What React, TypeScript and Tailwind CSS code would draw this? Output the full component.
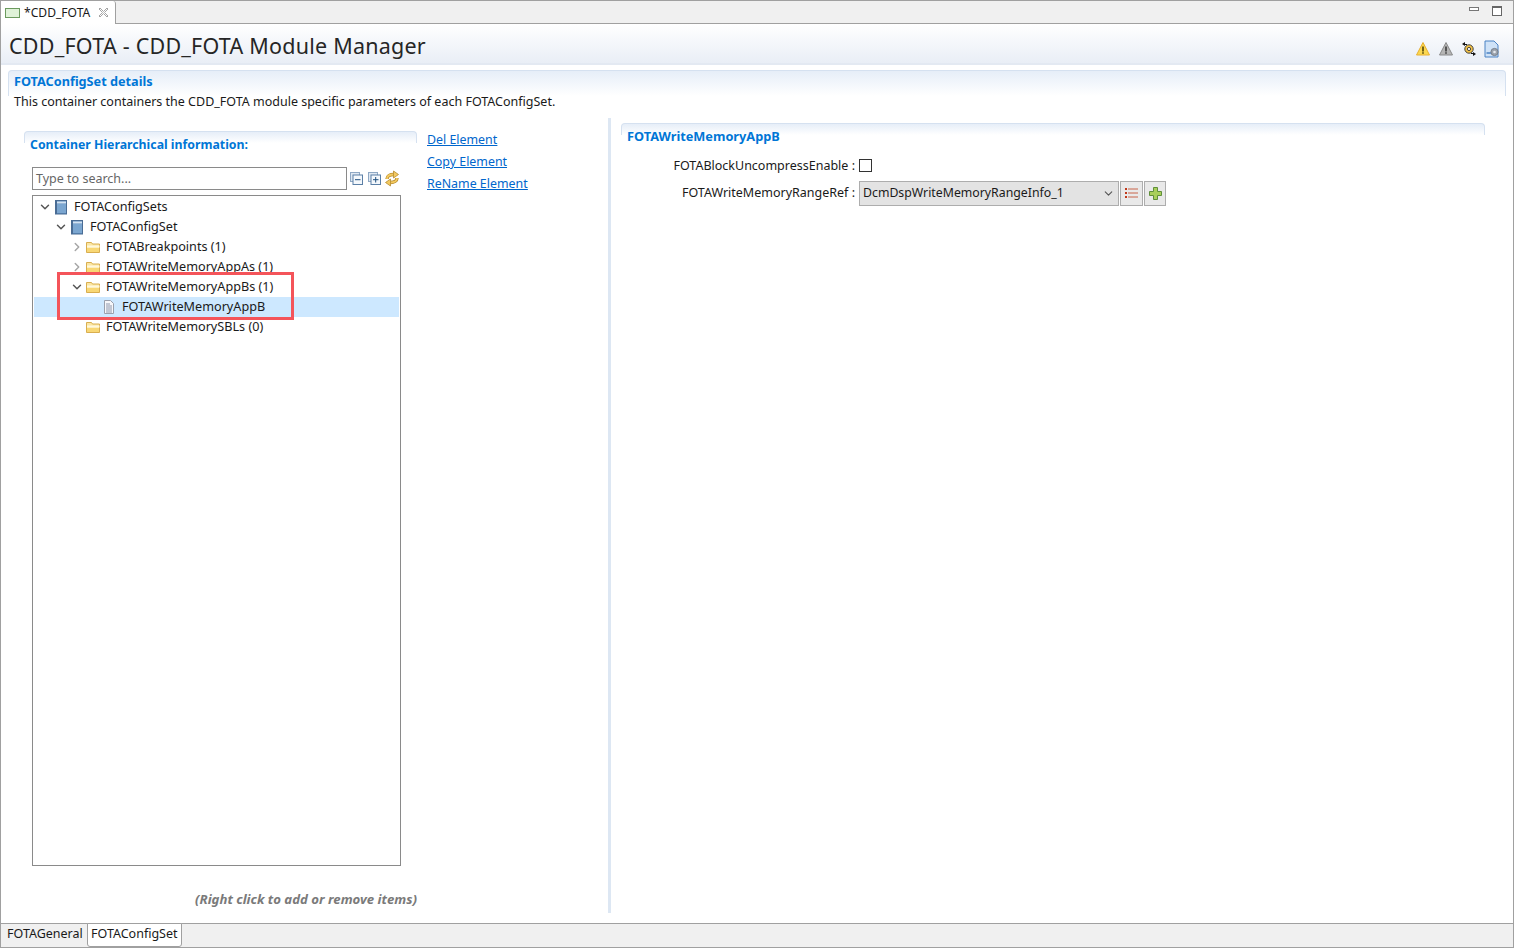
import { ChevronDown, ChevronRight } from "lucide-react";

const FONT = "font-['Noto_Sans','Open_Sans',sans-serif]";

function Folder() {
  return (
    <svg width="16" height="16" viewBox="0 0 16 16" className="shrink-0">
      <path d="M1.5 3.5h5l1 1.5h7v8.5h-13z" fill="#fbe6a2" stroke="#d9ae4f" />
      <path d="M2 6.5h12.5v2H2z" fill="#fff8dc" />
      <path d="M2 9h12v4H2z" fill="#f8d775" />
    </svg>
  );
}

function BookIcon() {
  return (
    <svg width="16" height="16" viewBox="0 0 16 16" className="shrink-0">
      <rect x="2.5" y="1.5" width="11" height="13.5" fill="#5d8cbc" stroke="#4a6c94" />
      <rect x="4" y="2.5" width="9" height="2" fill="#d3e2f1" />
      <rect x="4" y="5" width="9" height="9" fill="#7ba6d0" />
      <rect x="2.5" y="1.5" width="1.5" height="13.5" fill="#4a6c94" />
    </svg>
  );
}

function DocIcon() {
  return (
    <svg width="16" height="16" viewBox="0 0 16 16" className="shrink-0">
      <path d="M3.5 1.5h6l3 3v10h-9z" fill="#f7f7fa" stroke="#9aa0ad" />
      <path d="M5 5h4M5 7h6M5 9h6M5 11h6M5 13h6" stroke="#8d97ad" />
    </svg>
  );
}

function PanelTitle({ children, textClass }: { children: string; textClass: string }) {
  return (
    <div>
      <div className="h-[12px] rounded-t-[4px] border border-b-0 border-[#d5e1f0] bg-gradient-to-b from-[#e6eef8] to-white" />
      <div className={`-mt-[12px] pl-[6px] font-bold leading-[18px] text-[#0076d6] ${textClass}`}>{children}</div>
    </div>
  );
}

type Row = { label: string; depth: number; icon: "book" | "folder" | "doc"; arrow?: "open" | "closed"; selected?: boolean };

const ROWS: Row[] = [
  { label: "FOTAConfigSets", depth: 0, icon: "book", arrow: "open" },
  { label: "FOTAConfigSet", depth: 1, icon: "book", arrow: "open" },
  { label: "FOTABreakpoints (1)", depth: 2, icon: "folder", arrow: "closed" },
  { label: "FOTAWriteMemoryAppAs (1)", depth: 2, icon: "folder", arrow: "closed" },
  { label: "FOTAWriteMemoryAppBs (1)", depth: 2, icon: "folder", arrow: "open" },
  { label: "FOTAWriteMemoryAppB", depth: 3, icon: "doc", selected: true },
  { label: "FOTAWriteMemorySBLs (0)", depth: 2, icon: "folder" },
];

function TreeRow({ row }: { row: Row }) {
  return (
    <div className={`mx-px flex h-5 items-center ${row.selected ? "bg-[#cde8ff]" : ""}`}>
      <div style={{ width: row.depth * 16 + 3 }} className="shrink-0" />
      <div className="flex w-[16px] shrink-0 justify-center">
        {row.arrow === "open" && <ChevronDown size={14} strokeWidth={2.5} className="text-[#555]" />}
        {row.arrow === "closed" && <ChevronRight size={14} strokeWidth={2.5} className="text-[#a6a6a6]" />}
      </div>
      <div className="flex w-[21px] shrink-0 items-center">
        {row.icon === "book" && <BookIcon />}
        {row.icon === "folder" && <Folder />}
        {row.icon === "doc" && <DocIcon />}
      </div>
      <span className="pb-[2px] text-[12.65px] text-[#1a1a1a]">{row.label}</span>
    </div>
  );
}

function HeaderIcons() {
  return (
    <div className="flex items-center gap-[7px] pt-[11px]">
      <svg width="16" height="16" viewBox="0 0 16 16">
        <path d="M8 1.5l6.5 12.5h-13z" fill="#fbd850" stroke="#e8b030" />
        <path d="M7.3 5.5h1.4v5H7.3zM7.3 11.3h1.4v1.4H7.3z" fill="#3a3000" />
      </svg>
      <svg width="16" height="16" viewBox="0 0 16 16">
        <path d="M8 1.5l6.5 12.5h-13z" fill="#b5b5b5" stroke="#8a8a8a" />
        <path d="M7.3 5.5h1.4v5H7.3zM7.3 11.3h1.4v1.4H7.3z" fill="#2a2a2a" />
      </svg>
      <svg width="16" height="16" viewBox="0 0 16 16">
        <circle cx="8" cy="8" r="4.2" fill="#f3c246" stroke="#444" />
        <circle cx="8" cy="8" r="1.6" fill="#fff" stroke="#444" />
        <path d="M1 3l3-2v4zM15 13l-3 2v-4z" fill="#111" />
        <path d="M3 3.5h3M13 12.5h-3" stroke="#111" />
      </svg>
      <svg width="16" height="18" viewBox="0 0 16 18">
        <path d="M1 1h9l4 4v12H1z" fill="#cfe2f7" stroke="#4a82c4" />
        <path d="M2.5 13h5" stroke="#4a82c4" strokeWidth="1.5" />
        <circle cx="10.5" cy="12" r="3.6" fill="#9ca3ad" stroke="#777f8a" />
        <circle cx="10.5" cy="12" r="1.3" fill="#e6e9ee" />
      </svg>
    </div>
  );
}

export default function App() {
  return (
    <div className={`${FONT} flex h-[948px] w-[1514px] flex-col overflow-hidden border-x border-x-[#a0a0a0] bg-white text-[12.5px] text-[#1a1a1a]`}>
      {/* editor tab */}
      <div className="flex h-[24px] shrink-0 justify-between border-y border-y-[#a0a0a0] bg-[#f0f0f0]">
        <div className="-mb-px flex w-[115px] items-center rounded-tr-[3px] border-r border-r-[#a0a0a0] bg-white pl-[4px]">
          <div className="h-[10px] w-[15px] border border-[#6b9a5e] bg-[#dff2d8]" />
          <span className="pl-[4px] pt-[2px] text-[12.1px]">*CDD_FOTA</span>
          <svg width="11" height="11" viewBox="0 0 11 11" className="ml-[8px]">
            <path d="M1 2l1-1 3.5 3.5L9 1l1 1-3.5 3.5L10 9l-1 1-3.5-3.5L2 10l-1-1 3.5-3.5z" fill="#fff" stroke="#a5a5a5" />
          </svg>
        </div>
        <div className="flex items-start gap-[13px] pr-[11px] pt-[5px]">
          <div className="mt-px h-[4px] w-[10px] border border-[#777] bg-white" />
          <div className="h-[10px] w-[10px] border border-t-2 border-[#666] bg-white" />
        </div>
      </div>

      {/* form title */}
      <div className="flex h-[41px] shrink-0 items-center justify-between border-b-2 border-b-[#e3e9f2] bg-gradient-to-b from-white to-[#e9eef6] pl-[8px] pr-[13px]">
        <h1 className="pt-[5px] text-[21.5px] font-normal tracking-[0.23px] text-[#262626]">CDD_FOTA - CDD_FOTA Module Manager</h1>
        <HeaderIcons />
      </div>

      {/* details */}
      <div className="mx-[7px] mt-[5px] h-[26px] shrink-0 rounded-t-[4px] border border-b-0 border-[#d5e1f0] bg-gradient-to-b from-[#e6eef8] to-white pl-[5px] pt-[1px] text-[12.7px] font-bold leading-[18px] text-[#0076d6]">
        FOTAConfigSet details
      </div>
      <p className="-mt-[3px] h-[18px] shrink-0 pl-[13px] leading-[18px]">
        This container containers the CDD_FOTA module specific parameters of each FOTAConfigSet.
      </p>

      <div className="mt-[7px] flex h-[795px] shrink-0">
        {/* left column */}
        <div className="flex w-[607px] shrink-0 flex-col">
          <div className="flex shrink-0">
            <div className="ml-[23px] w-[393px] pt-[13px] text-[12.3px]">
              <PanelTitle textClass="pt-[4.5px]">Container Hierarchical information:</PanelTitle>
            </div>
            <div className="flex flex-col pl-[10px] pt-[11px] text-[12.4px] leading-[22px] text-[#0066cc] underline">
              <a>Del Element</a>
              <a>Copy Element</a>
              <a>ReName Element</a>
            </div>
          </div>
          <div className="-mt-[28px] ml-[31px] flex h-[24px] shrink-0 items-start">
            <div className="flex h-[23px] w-[315px] items-center border border-[#8a8a8a] pl-[3px] pt-[2px] text-[#666]">Type to search...</div>
            <div className="flex h-[23px] items-center gap-[5px] pl-[3px]">
              <svg width="13" height="13" viewBox="0 0 13 13">
                <rect x="0.5" y="0.5" width="9" height="9" fill="#dfe8f2" stroke="#8fa8c4" />
                <rect x="3" y="3" width="9.5" height="9.5" fill="#f4f8fc" stroke="#5b7fa6" />
                <path d="M5 7.7h5.5" stroke="#1f4f7f" />
              </svg>
              <svg width="13" height="13" viewBox="0 0 13 13">
                <rect x="0.5" y="0.5" width="9" height="9" fill="#dfe8f2" stroke="#8fa8c4" />
                <rect x="3" y="3" width="9.5" height="9.5" fill="#f4f8fc" stroke="#5b7fa6" />
                <path d="M5 7.7h5.5M7.7 5v5.5" stroke="#1f4f7f" />
              </svg>
              <svg width="16" height="17" viewBox="0 0 16 17" className="-ml-[2px] shrink-0">
                <g fill="none" stroke="#b58a2e" strokeWidth="3.4">
                  <path d="M3 9C3 6 6 4.5 9.5 4.5" />
                  <path d="M13 8C13 11 10 12.5 6.5 12.5" />
                </g>
                <g fill="none" stroke="#f3c95f" strokeWidth="1.8">
                  <path d="M3 9C3 6 6 4.5 9.5 4.5" />
                  <path d="M13 8C13 11 10 12.5 6.5 12.5" />
                </g>
                <path d="M9.5 1L14.5 4.5L9.5 8z" fill="#f3c95f" stroke="#b58a2e" strokeWidth="0.8" />
                <path d="M6.5 9L1.5 12.5L6.5 16z" fill="#f3c95f" stroke="#b58a2e" strokeWidth="0.8" />
              </svg>
            </div>
          </div>

          {/* tree */}
          <div className="relative ml-[31px] mt-[4px] h-[671px] w-[369px] shrink-0 border border-[#8a8a8a] bg-white pt-[1px]">
            {ROWS.map((row) => (
              <TreeRow key={row.label} row={row} />
            ))}
            <div className="absolute left-[24px] top-[76px] h-[48px] w-[237px] border-[3px] border-[#f4545a]" />
          </div>

          <div className="mt-[24px] pl-[194px] text-[13.2px] font-bold italic leading-[18px] text-[#7a7a7a]">(Right click to add or remove items)</div>
        </div>

        {/* divider */}
        <div className="h-full w-[3px] shrink-0 bg-[#dde7f3]" />

        {/* right column */}
        <div className="flex-1 pl-[10px] pr-[28px] pt-[5px]">
          <div className="text-[12.75px]">
            <PanelTitle textClass="pt-[4px]">FOTAWriteMemoryAppB</PanelTitle>
          </div>
          <div className="mt-[10px] flex h-[21px] items-center">
            <span className="w-[234px] pt-[2px] text-right">FOTABlockUncompressEnable :</span>
            <div className="ml-[4px] size-[13px] border border-[#333] bg-white" />
          </div>
          <div className="mt-[4px] flex h-[26px] items-center">
            <span className="w-[234px] text-right">FOTAWriteMemoryRangeRef :</span>
            <div className="ml-[4px] flex h-[25px] w-[260px] items-center justify-between border border-[#adadad] bg-[#e3e3e3] px-[3px] text-[12.3px]">
              <span>DcmDspWriteMemoryRangeInfo_1</span>
              <ChevronDown size={13} className="text-[#555]" />
            </div>
            <div className="ml-[1px] flex h-[25px] w-[23px] items-center justify-center border border-[#adadad] bg-[#e9e9e9]">
              <svg width="13" height="10" viewBox="0 0 13 10" className="shrink-0">
                <path d="M0 1h2M0 5h2M0 9h2" stroke="#c0391b" strokeWidth="2" />
                <path d="M3 1H13M3 5H13M3 9H13" stroke="#c8654a" strokeWidth="1" />
              </svg>
            </div>
            <div className="ml-[1px] flex h-[25px] w-[22px] items-center justify-center border border-[#adadad] bg-[#e9e9e9]">
              <svg width="13" height="13" viewBox="0 0 13 13" className="shrink-0">
                <path d="M4.5 0.5h4v4h4v4h-4v4h-4v-4h-4v-4h4z" fill="#a9cf5a" stroke="#5f8f3a" />
              </svg>
            </div>
          </div>
        </div>
      </div>

      {/* page tabs */}
      <div className="mt-[10px] flex h-[25px] shrink-0 items-stretch border-y border-y-[#a0a0a0] bg-[#f0f0f0] pb-[1px]">
        <div className="flex w-[86px] items-center pb-[2px] pl-[6px]">FOTAGeneral</div>
        <div className="-mt-px -mb-[1px] flex w-[95px] items-center rounded-b-[3px] border border-[#a0a0a0] bg-white pb-[1px] pl-[3px]">FOTAConfigSet</div>
      </div>
    </div>
  );
}
